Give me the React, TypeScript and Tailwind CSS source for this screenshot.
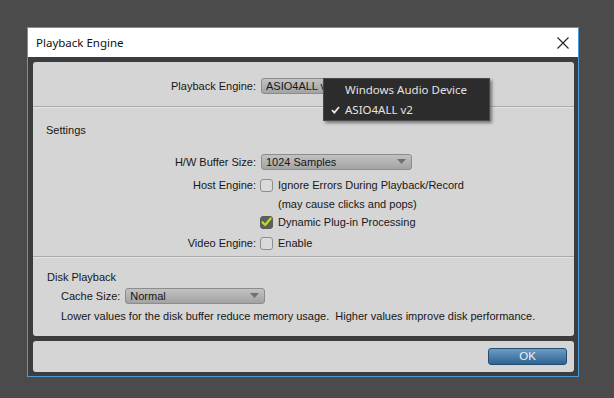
import React from "react";

function Select({ value, width }: { value: string; width: number }) {
  return (
    <div
      className="relative h-[16px] rounded-[3px] border border-[#8c8c8c] bg-gradient-to-b from-[#c2c2c2] to-[#a3a3a3] flex items-center pl-[4px] text-[11px] text-[#161616]"
      style={{ width }}
    >
      <span>{value}</span>
      <svg className="absolute right-[5px] top-[4px]" width="9" height="6" viewBox="0 0 9 6">
        <path d="M0 0 L9 0 L4.5 5 Z" fill="#707070" />
      </svg>
    </div>
  );
}

function Checkbox({ checked }: { checked?: boolean }) {
  if (checked) {
    return (
      <div className="w-[13px] h-[13px] rounded-[3px] border border-[#5a5a5a] bg-[#5e5e5e] flex items-center justify-center">
        <svg width="11" height="10" viewBox="0 0 11 10">
          <path d="M1.5 5.2 L4.2 8 L9.6 1.5" stroke="#b4e21e" strokeWidth="2.2" fill="none" strokeLinecap="round" strokeLinejoin="round" />
        </svg>
      </div>
    );
  }
  return <div className="w-[13px] h-[13px] rounded-[3px] border border-[#8e8e8e] bg-[#dadada]" />;
}

function Label({ children }: { children: React.ReactNode }) {
  return <div className="w-[223px] text-right shrink-0">{children}</div>;
}

export default function App() {
  return (
    <div className="relative w-[614px] h-[398px] bg-[#4b4b4b] pl-[27px] pt-[27px] overflow-hidden">
      <div className="w-[552px] h-[350px] border border-[#4b9ad6] flex flex-col bg-[#3c3c3c]">
        {/* Title bar */}
        <div className="h-[29px] bg-white flex items-center justify-between pl-[8px] pr-[9px] shrink-0">
          <span className="text-[11.5px] text-[#111]" style={{ fontFamily: '"Noto Sans", "Open Sans", sans-serif' }}>
            Playback Engine
          </span>
          <svg width="12" height="12" viewBox="0 0 12 12">
            <path d="M0.5 0.5 L11.5 11.5 M11.5 0.5 L0.5 11.5" stroke="#222" strokeWidth="1.1" />
          </svg>
        </div>

        {/* Body */}
        <div
          className="flex-1 flex flex-col gap-[5px] pt-[5px] pl-[5px] pr-[4px] pb-[4px] text-[11px] text-[#171717]"
          style={{ fontFamily: '"Liberation Sans", Arial, sans-serif' }}
        >
          <div className="h-[274px] rounded-[3px] bg-[#d5d5d5] flex flex-col">
            <div className="mt-[16px] h-[16px] flex items-center">
              <Label>Playback Engine:</Label>
              <div className="ml-[5px]">
                <Select value="ASIO4ALL v2" width={150} />
              </div>
            </div>
            <div className="mt-[12px] h-[2px] border-t border-[#a9a9a9] border-b border-b-[#e4e4e4]" />
            <div className="mt-[15px] h-[14px] flex items-center pl-[13px]">Settings</div>
            <div className="mt-[17px] h-[16px] flex items-center">
              <Label>H/W Buffer Size:</Label>
              <div className="ml-[5px]">
                <Select value="1024 Samples" width={151} />
              </div>
            </div>
            <div className="mt-[7px] h-[16px] flex items-center">
              <Label>Host Engine:</Label>
              <div className="ml-[4px]">
                <Checkbox />
              </div>
              <span className="ml-[5px]">Ignore Errors During Playback/Record</span>
            </div>
            <div className="mt-[4px] h-[14px] flex items-center pl-[245px]">(may cause clicks and pops)</div>
            <div className="mt-[3px] h-[16px] flex items-center">
              <div className="w-[223px] shrink-0" />
              <div className="ml-[4px]">
                <Checkbox checked />
              </div>
              <span className="ml-[5px]">Dynamic Plug-in Processing</span>
            </div>
            <div className="mt-[5px] h-[16px] flex items-center">
              <Label>Video Engine:</Label>
              <div className="ml-[4px]">
                <Checkbox />
              </div>
              <span className="ml-[5px]">Enable</span>
            </div>
            <div className="mt-[5px] h-[2px] border-t border-[#a9a9a9] border-b border-b-[#e4e4e4]" />
            <div className="mt-[12px] h-[14px] flex items-center pl-[14px]">Disk Playback</div>
            <div className="mt-[4px] h-[16px] flex items-center pl-[28px]">
              <span>Cache Size:</span>
              <div className="ml-[5px]">
                <Select value="Normal" width={140} />
              </div>
            </div>
            <div className="mt-[5px] h-[14px] flex items-center pl-[28px] whitespace-pre">
              {"Lower values for the disk buffer reduce memory usage.  Higher values improve disk performance."}
            </div>
          </div>

          <div className="h-[31px] rounded-[3px] bg-[#d5d5d5] flex items-center justify-end pr-[7px]">
            <button
              className="w-[79px] h-[17px] rounded-[3px] border border-[#234e74] bg-gradient-to-b from-[#6a9cc6] to-[#2f6391] text-[#eef4fa] text-[11.5px] flex items-center justify-center leading-none"
              style={{ fontFamily: '"Liberation Sans", Arial, sans-serif' }}
            >
              OK
            </button>
          </div>
        </div>
      </div>

      {/* Dropdown menu */}
      <div
        className="absolute left-[323px] top-[78px] w-[167px] h-[43px] bg-[#2c2c2c] border border-[#4a4a4a] shadow-[2px_2px_3px_rgba(0,0,0,0.45)] flex flex-col justify-center text-[11.5px] text-[#e4e4e4]"
        style={{ fontFamily: '"Noto Sans", "Open Sans", sans-serif' }}
      >
        <div className="h-[20px] flex items-center pl-[21px]">Windows Audio Device</div>
        <div className="h-[20px] flex items-center relative pl-[21px]">
          <svg className="absolute left-[7px] top-[6px]" width="9" height="8" viewBox="0 0 9 8">
            <path d="M1 4.2 L3.4 6.6 L8 1" stroke="#e8e8e8" strokeWidth="1.8" fill="none" />
          </svg>
          ASIO4ALL v2
        </div>
      </div>
    </div>
  );
}
